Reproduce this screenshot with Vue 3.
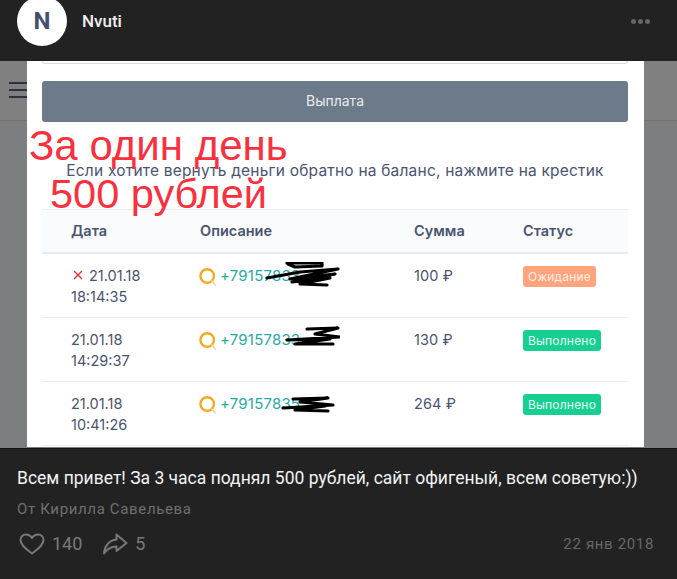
<script setup>
const rows = [
  { date: '21.01.18', time: '18:14:35', phone: '+79157833', sum: '100 ₽', status: 'Ожидание', kind: 'wait', cancel: true,
    scribble: 'M87 1 L122 1 L122 4 L95 5 L88 2 M67 16 L100 10 L138 7 L90 17 L135 12 L92 20 L130 16 L100 22 L127 23' },
  { date: '21.01.18', time: '14:29:37', phone: '+79157833', sum: '130 ₽', status: 'Выполнено', kind: 'done', cancel: false,
    scribble: 'M107 3 L138 2 L115 8 L140 11 L87 14 L130 13 L95 18 L133 18' },
  { date: '21.01.18', time: '10:41:26', phone: '+79157835', sum: '264 ₽', status: 'Выполнено', kind: 'done', cancel: false,
    scribble: 'M93 9 L128 8 L100 12 L133 15 L83 18 L125 16 L95 20 L128 21' },
]
</script>

<template>
  <div class="page">
    <header class="top">
      <div class="avatar">N</div>
      <div class="name">Nvuti</div>
      <div class="dots"><i></i><i></i><i></i></div>
    </header>

    <section class="shot">
      <div class="backdrop">
        <div class="nav">
          <span class="burger"><i></i><i></i><i></i></span>
        </div>
      </div>
      <div class="modal">
        <div class="field"></div>
        <div class="pay">Выплата</div>
        <p class="hint">Если хотите вернуть деньги обратно на баланс, нажмите на крестик</p>
        <div class="table">
          <div class="row head">
            <div>Дата</div>
            <div>Описание</div>
            <div>Сумма</div>
            <div>Статус</div>
          </div>
          <div v-for="r in rows" :key="r.time" class="row body">
            <div class="when">
              <div class="day">
                <svg v-if="r.cancel" class="cross" viewBox="0 0 10 10"><path d="M1 1 L9 9 M9 1 L1 9" /></svg>
                {{ r.date }}
              </div>
              <div>{{ r.time }}</div>
            </div>
            <div class="desc">
              <svg class="qiwi" viewBox="0 0 18 18">
                <circle cx="8.2" cy="8" r="6.8" fill="none" stroke="#f7a823" stroke-width="2.4" />
                <path d="M12.6 13 L16.6 17" fill="none" stroke="#f9cf8e" stroke-width="1.4" stroke-linecap="round" />
              </svg>
              <span class="phone">{{ r.phone }}</span>
              <svg class="scribble" viewBox="0 0 140 30">
                <path :d="r.scribble" fill="none" stroke="#000" stroke-width="3.2" stroke-linecap="round" stroke-linejoin="round" />
              </svg>
            </div>
            <div class="sum">{{ r.sum }}</div>
            <div><span class="badge" :class="r.kind">{{ r.status }}</span></div>
          </div>
        </div>
      </div>
      <div class="note one">За один день</div>
      <div class="note two">500 рублей</div>
    </section>

    <footer class="foot">
      <div class="title">Всем привет! За 3 часа поднял 500 рублей, сайт офигеный, всем советую:))</div>
      <div class="author">От Кирилла Савельева</div>
      <div class="meta">
        <svg class="heart" viewBox="0 0 26 22">
          <path d="M13 20.5 C8 16.5 1.5 12.5 1.5 7 C1.5 3.7 4 1.5 7 1.5 C9.5 1.5 11.7 2.8 13 5 C14.3 2.8 16.5 1.5 19 1.5 C22 1.5 24.5 3.7 24.5 7 C24.5 12.5 18 16.5 13 20.5 Z" />
        </svg>
        <span class="count">140</span>
        <svg class="share" viewBox="0 0 26 22">
          <path d="M14.5 1.5 L24.5 10 L14.5 18 L14.5 13.5 C9.5 13.5 5.5 15.5 2 20.5 C2.5 13 7 7.5 14.5 6.5 Z" />
        </svg>
        <span class="count">5</span>
        <span class="date">22 янв 2018</span>
      </div>
    </footer>
  </div>
</template>

<style scoped>
.page {
  width: 677px;
  height: 579px;
  display: flex;
  flex-direction: column;
  background: #222;
  overflow: hidden;
  font-family: Roboto, sans-serif;
}
.top {
  height: 61px;
  flex: none;
  display: flex;
  align-items: flex-start;
  padding-left: 17px;
  padding-right: 27px;
  box-sizing: border-box;
  background: #222;
  position: relative;
  z-index: 1;
}
.avatar {
  width: 50px;
  height: 50px;
  margin-top: -4px;
  border-radius: 50%;
  background: #fff;
  color: #434f6b;
  font: 700 24px/50px Roboto, sans-serif;
  text-align: center;
  flex: none;
}
.name {
  margin-left: 15px;
  margin-top: 11px;
  font-size: 17px;
  line-height: 20px;
  font-weight: 500;
  color: #f0f0f0;
}
.dots {
  margin-left: auto;
  margin-top: 19px;
  display: flex;
  gap: 2px;
}
.dots i {
  width: 5px;
  height: 5px;
  border-radius: 50%;
  background: #666;
}
.shot {
  height: 387px;
  flex: none;
  position: relative;
  overflow: hidden;
  display: flex;
  justify-content: flex-start;
  background: #7d7e80;
  font-family: Inter, sans-serif;
}
.backdrop {
  position: absolute;
  inset: 0;
}
.nav {
  height: 60px;
  box-sizing: border-box;
  background: #808080;
  border-bottom: 1px solid #737373;
  display: flex;
  align-items: center;
  padding-left: 9px;
}
.burger {
  display: flex;
  flex-direction: column;
  gap: 5px;
  width: 18px;
  margin-top: -1px;
}
.burger i {
  height: 2px;
  background: #2d3140;
}
.modal {
  position: relative;
  margin-left: 27px;
  width: 617px;
  height: 386px;
  box-sizing: border-box;
  padding: 0 16px 0 15px;
  background: #fff;
}
.field {
  height: 3px;
  border: 1px solid #d6dbe0;
  border-top: 0;
  border-radius: 0 0 4px 4px;
  box-sizing: border-box;
}
.pay {
  margin-top: 17px;
  height: 41px;
  border-radius: 3px;
  background: #6c7a89;
  color: #e8ebee;
  font-size: 14px;
  line-height: 40px;
  text-align: center;
}
.hint {
  margin: 40px 0 0;
  height: 47px;
  text-align: center;
  font-size: 15.5px;
  line-height: 18px;
  color: #4a5470;
  white-space: nowrap;
  letter-spacing: 0.2px;
}
.table {
  color: #4a5470;
  font-size: 14.5px;
}
.row {
  display: grid;
  grid-template-columns: 129px 214px 109px 1fr;
  padding-left: 29px;
}
.head {
  height: 45px;
  box-sizing: border-box;
  align-items: center;
  background: #f9fbfd;
  border-top: 1px solid #e8eef4;
  border-bottom: 2px solid #e5ebf2;
  font-weight: 600;
  font-size: 14.5px;
  padding-bottom: 2px;
}
.body {
  height: 64px;
  box-sizing: border-box;
  border-bottom: 1px solid #e7edf3;
  padding-top: 11px;
  line-height: 21px;
}
.day {
  display: flex;
  align-items: center;
  gap: 7px;
}
.cross {
  width: 10px;
  height: 10px;
  margin-left: 2px;
  margin-right: -1px;
  margin-top: -1px;
}
.cross path {
  stroke: #e8262c;
  stroke-width: 1.2;
  fill: none;
}
.desc {
  position: relative;
  display: flex;
  align-items: flex-start;
  gap: 3px;
}
.qiwi {
  width: 18px;
  height: 18px;
  flex: none;
  margin-top: 3px;
  margin-left: -1px;
}
.phone {
  color: #27a9a5;
  font-size: 15px;
  letter-spacing: 0.2px;
}
.scribble {
  position: absolute;
  left: 0;
  top: -3px;
  width: 140px;
  height: 30px;
}
.sum {
  letter-spacing: 0.1px;
}
.badge {
  display: inline-block;
  padding: 0 5px;
  height: 21px;
  line-height: 21px;
  border-radius: 3px;
  font-size: 12px;
  letter-spacing: 0.2px;
  color: #e8fff6;
}
.wait {
  background: #ffa47c;
  color: #fff0e6;
}
.done {
  background: #17cf90;
}
.note {
  position: absolute;
  color: #f9303e;
  font-family: "Liberation Sans", sans-serif;
  font-size: 42px;
  line-height: 46px;
  white-space: nowrap;
}
.one {
  left: 29px;
  top: 62px;
}
.two {
  left: 50px;
  top: 110px;
  font-size: 41.5px;
}
.foot {
  flex: 1;
  background: #222;
  border-top: 1px solid #111;
  padding: 19px 23px 0 17px;
  box-sizing: border-box;
}
.title {
  font-size: 17.5px;
  line-height: 20px;
  color: #f2f3f5;
  white-space: nowrap;
}
.author {
  margin-top: 12px;
  font-size: 15px;
  line-height: 18px;
  color: #707070;
  letter-spacing: 0.65px;
}
.meta {
  margin-top: 15px;
  display: flex;
  align-items: center;
  color: #7a7a7a;
}
.heart,
.share {
  width: 26px;
  height: 22px;
  fill: none;
  stroke: #787878;
  stroke-width: 2;
  stroke-linejoin: round;
}
.heart {
  margin-left: 2px;
}
.count {
  margin-left: 7px;
  font-size: 18px;
  line-height: 22px;
}
.share {
  margin-left: 20px;
}
.date {
  margin-left: auto;
  font-size: 15px;
  color: #686868;
  letter-spacing: 0.65px;
}
</style>
